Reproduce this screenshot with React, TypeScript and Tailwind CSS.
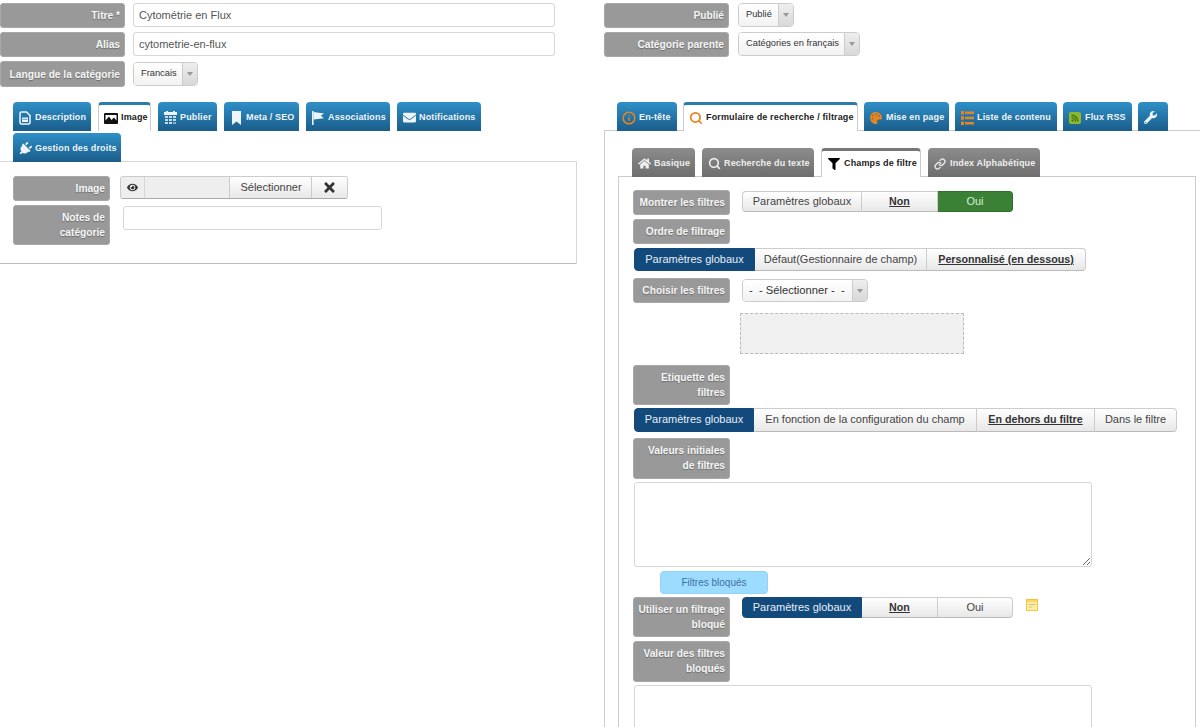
import React from 'react';
import {
  FaEnvelope,
  FaEye,
  FaFilter,
  FaHome,
  FaPalette,
  FaPlug,
  FaRss,
  FaTimes,
  FaWrench,
} from 'react-icons/fa';
import { Info, Link, Search } from 'lucide-react';

const labelBase =
  'shrink-0 rounded-[3px] bg-[#999999] border border-[#a8a8a8] text-right text-[10.2px] font-bold leading-[15px] text-[#f6f6f6] pr-[4px] [text-shadow:0_1px_1px_rgba(0,0,0,0.3)] flex';

function Label({ children, className }: { children: React.ReactNode; className: string }) {
  return <div className={`${labelBase} ${className}`}>{children}</div>;
}

function TextInput({ value, className }: { value: string; className: string }) {
  return (
    <input
      readOnly
      value={value}
      className={`h-[24px] rounded-[3px] border border-[#d6d6d6] bg-white px-[5px] text-[11px] text-[#555555] outline-none ${className}`}
    />
  );
}

function SelectBox({ value, className, textClass }: { value: string; className: string; textClass: string }) {
  return (
    <div className={`flex rounded-[4px] border border-[#cccccc] overflow-hidden ${className}`}>
      <div className={`flex-1 flex items-center bg-gradient-to-b from-white to-[#f2f2f2] text-[#333333] whitespace-nowrap ${textClass}`}>
        {value}
      </div>
      <div className="w-[15px] flex items-center justify-center border-l border-[#cccccc] bg-gradient-to-b from-[#eeeeee] to-[#d8d8d8]">
        <span className="w-0 h-0 border-l-[3px] border-r-[3px] border-t-[4px] border-l-transparent border-r-transparent border-t-[#999999]" />
      </div>
    </div>
  );
}

function Tab({
  icon,
  text,
  w,
  active,
  gray,
}: {
  icon: React.ReactNode;
  text?: string;
  w: string;
  active?: boolean;
  gray?: boolean;
}) {
  const look = active
    ? gray
      ? 'z-10 bg-white border-x border-[#cccccc] border-t-[3px] border-t-[#777777] text-[#222222]'
      : 'z-10 bg-white border-x border-[#cccccc] border-t-[3px] border-t-[#2a7cab] text-[#222222]'
    : gray
      ? 'bg-gradient-to-b from-[#8c8c8c] to-[#6e6e6e] text-[#eeeeee] pt-[2px]'
      : 'bg-gradient-to-b from-[#2f90c8] to-[#1b5d8a] text-[#eef5fa] pt-[2px]';
  return (
    <div
      className={`relative h-[29px] -mb-px shrink-0 rounded-t-[4px] flex items-center pl-[5px] gap-[3px] text-[9px] font-bold tracking-[0.15px] whitespace-nowrap ${w} ${look}`}
    >
      <span className="w-[14px] flex justify-center shrink-0">{icon}</span>
      {text}
    </div>
  );
}

function Seg({
  children,
  w,
  kind,
}: {
  children: string;
  w: string;
  kind?: 'blue' | 'green' | 'bold';
}) {
  const look =
    kind === 'blue'
      ? 'bg-[#134a7c] text-[#e8eef4] border-[#134a7c] text-[11px]'
      : kind === 'green'
        ? 'bg-[#3a8135] text-[#dcecda] border-[#2f6f2b] text-[11px]'
        : kind === 'bold'
          ? 'bg-gradient-to-b from-white to-[#e8e8e8] text-[#333333] font-bold underline border-[#cccccc] border-b-[#bbbbbb] text-[10.7px]'
          : 'bg-gradient-to-b from-white to-[#e8e8e8] text-[#444444] border-[#cccccc] border-b-[#bbbbbb] text-[11px]';
  return (
    <div
      className={`h-full flex items-center justify-center border-y border-r first:border-l first:rounded-l-[4px] last:rounded-r-[4px] whitespace-nowrap pb-px ${w} ${look}`}
    >
      {children}
    </div>
  );
}

function DocIcon() {
  return (
    <svg width="12" height="14" viewBox="0 0 12 14" fill="none">
      <path d="M1 2.500A1.500 1.500 0 0 1 2.500 1H7.500L11 4.500V11.500A1.500 1.500 0 0 1 9.500 13H2.500A1.500 1.500 0 0 1 1 11.500Z" stroke="currentColor" strokeWidth="1.500" />
      <path d="M3 6.500h6v4.500H3z" fill="currentColor" />
      <path d="M3.500 8.300h5" stroke="#2a7cab" strokeWidth="0.700" />
    </svg>
  );
}

function PictureIcon() {
  return (
    <svg width="14" height="11" viewBox="0 0 14 11">
      <rect width="14" height="11" rx="1" fill="#111111" />
      <path d="M1.500 2h11v5.500L10 4.500 7.500 7 5 3.500 1.500 7.500z" fill="#ffffff" />
    </svg>
  );
}

function CalendarIcon() {
  return (
    <svg width="13" height="14" viewBox="0 0 13 14" fill="currentColor">
      <path d="M0 1h2V0h2v1h5V0h2v1h2v3H0z" />
      <path d="M1 5h3v2H1zM5 5h3v2H5zM9 5h3v2H9zM1 8h3v2H1zM5 8h3v2H5zM9 8h3v2H9zM1 11h3v2H1zM5 11h3v2H5z" opacity="0.800" />
      <path d="M9 11h3v2H9z" opacity="0.500" />
    </svg>
  );
}

function BookmarkIcon() {
  return (
    <svg width="9" height="14" viewBox="0 0 9 14" fill="currentColor">
      <path d="M0 0h9v14L4.500 10.500 0 14z" />
    </svg>
  );
}

function Pennant() {
  return (
    <svg width="14" height="14" viewBox="0 0 14 14" fill="currentColor">
      <path d="M1 0h1.600v14H1z" />
      <path d="M2.600 1l10.400 1.600-3.200 2.200 3.200 2.400L2.600 8.400z" />
    </svg>
  );
}

function ListIcon() {
  return (
    <svg width="13" height="14" viewBox="0 0 13 14" fill="#e8841c">
      <path d="M0 0h3v3.400H0zM4 0.500h9v2.400H4zM0 5.300h3v3.400H0zM4 5.800h9v2.400H4zM0 10.600h3v3.400H0zM4 11.100h9v2.400H4z" />
    </svg>
  );
}

function NoteIcon() {
  return (
    <svg className="ml-[13px] mt-[2px]" width="12" height="12" viewBox="0 0 12 12">
      <rect x="0.500" y="0.500" width="11" height="11" fill="#fdeea8" stroke="#f3c443" />
      <rect x="1" y="1" width="10" height="2" fill="#f9d561" />
      <path d="M2.500 5.500h7M2.500 8h4" stroke="#d6c277" strokeWidth="1" />
    </svg>
  );
}

export default function App() {
  return (
    <div className="h-[727px] w-[1200px] overflow-hidden bg-white flex font-['Liberation_Sans',Arial,sans-serif]">
      {/* colonne gauche */}
      <div className="w-[577px] shrink-0 pt-[3px]">
        <div className="flex flex-col gap-[4px]">
          <div className="flex gap-[8px]">
            <Label className="w-[125px] h-[25px] items-center justify-end">Titre *</Label>
            <TextInput value="Cytométrie en Flux" className="w-[422px]" />
          </div>
          <div className="flex gap-[8px]">
            <Label className="w-[125px] h-[25px] items-center justify-end">Alias</Label>
            <TextInput value="cytometrie-en-flux" className="w-[422px]" />
          </div>
          <div className="flex gap-[8px]">
            <Label className="w-[125px] h-[26px] items-center justify-end">Langue de la catégorie</Label>
            <SelectBox value="Francais" className="w-[65px] h-[24px] mt-px" textClass="pl-[7px] text-[9.3px]" />
          </div>
        </div>

        <div className="mt-[15px] pl-[13px] flex flex-wrap gap-x-[7px] gap-y-[3px] relative">
          <Tab w="w-[78px]" text="Description" icon={<DocIcon />} />
          <Tab w="w-[53px]" text="Image" active icon={<PictureIcon />} />
          <Tab w="w-[59px]" text="Publier" icon={<CalendarIcon />} />
          <Tab w="w-[75px]" text="Meta / SEO" icon={<BookmarkIcon />} />
          <Tab w="w-[84px]" text="Associations" icon={<Pennant />} />
          <Tab w="w-[84px]" text="Notifications" icon={<FaEnvelope size={13} />} />
          <Tab w="w-[108px]" text="Gestion des droits" icon={<FaPlug size={14} className="rotate-45" />} />
        </div>
        <div className="ml-[-1px] h-[103px] border border-l-0 border-t-[#d9d9d9] border-r-[#d9d9d9] border-b-[#bbbbbb] pl-[14px] pt-[14px]">
          <div className="flex">
            <Label className="w-[97px] h-[25px] items-center justify-end">Image</Label>
            <div className="ml-[10px] w-[228px] h-[23px] flex rounded-[3px] border border-[#cccccc] border-b-[#aaaaaa] text-[11px] overflow-hidden">
              <div className="w-[24px] bg-[#eeeeee] border-r border-[#d6d6d6] flex items-center justify-center text-[#333333]">
                <FaEye size={11} />
              </div>
              <div className="w-[85px] bg-[#eeeeee] border-r border-[#cccccc]" />
              <div className="w-[82px] bg-gradient-to-b from-white to-[#e8e8e8] border-r border-[#cccccc] flex items-center justify-center text-[#444444] pl-px">
                Sélectionner
              </div>
              <div className="flex-1 bg-gradient-to-b from-white to-[#e8e8e8] flex items-center justify-center text-[#333333]">
                <FaTimes size={15} />
              </div>
            </div>
          </div>
          <div className="flex mt-[4px]">
            <Label className="w-[97px] h-[40px] justify-end pt-[4px]">Notes de catégorie</Label>
            <TextInput value="" className="ml-[13px] mt-px w-[259px]" />
          </div>
        </div>
      </div>

      {/* colonne droite */}
      <div className="ml-[27px] flex-1 pt-[3px] min-w-0">
        <div className="flex flex-col gap-[4px]">
          <div className="flex gap-[9px]">
            <Label className="w-[125px] h-[25px] items-center justify-end">Publié</Label>
            <SelectBox value="Publié" className="w-[56px] h-[24px]" textClass="pl-[7px] text-[9.3px]" />
          </div>
          <div className="flex gap-[9px]">
            <Label className="w-[125px] h-[25px] items-center justify-end">Catégorie parente</Label>
            <SelectBox value="Catégories en français" className="w-[122px] h-[24px]" textClass="pl-[7px] text-[9.3px]" />
          </div>
        </div>

        <div className="mt-[45px] pl-[13px] flex gap-x-[6px] relative">
          <Tab w="w-[60px]" text="En-tête" icon={<Info size={14} strokeWidth={2.5} className="text-[#e8841c]" />} />
          <Tab
            w="w-[175px]"
            text="Formulaire de recherche / filtrage"
            active
            icon={<Search size={14} strokeWidth={3} className="text-[#e8841c]" />}
          />
          <Tab w="w-[85px]" text="Mise en page" icon={<FaPalette size={12} className="text-[#e8841c]" />} />
          <Tab w="w-[102px]" text="Liste de contenu" icon={<ListIcon />} />
          <Tab
            w="w-[69px]"
            text="Flux RSS"
            icon={
              <span className="w-[12px] h-[12px] rounded-[2px] bg-[#8cb82b] flex items-center justify-center">
                <FaRss size={8} className="text-[#3f6b12]" />
              </span>
            }
          />
          <Tab w="w-[30px]" icon={<FaWrench size={13} />} />
        </div>

        <div className="w-[620px] h-[600px] border-t border-l border-[#cccccc] pl-[13px] pt-[17px]">
          <div className="pl-[14px] flex gap-x-[7px] relative">
            <Tab gray w="w-[63px]" text="Basique" icon={<FaHome size={13} />} />
            <Tab gray w="w-[112px]" text="Recherche du texte" icon={<Search size={13} strokeWidth={3} />} />
            <Tab gray active w="w-[100px]" text="Champs de filtre" icon={<FaFilter size={12} className="text-black" />} />
            <Tab gray w="w-[112px]" text="Index Alphabétique" icon={<Link size={12} strokeWidth={2.5} />} />
          </div>
          <div className="w-[578px] h-[560px] border-t border-r border-l border-[#cccccc] pl-[14px] pt-[13px]">
            <div className="flex">
              <Label className="w-[97px] h-[25px] items-center justify-end">Montrer les filtres</Label>
              <div className="ml-[12px] mt-px h-[21px] flex">
                <Seg w="w-[120px]">Paramètres globaux</Seg>
                <Seg w="w-[76px]" kind="bold">Non</Seg>
                <Seg w="w-[75px]" kind="green">Oui</Seg>
              </div>
            </div>
            <Label className="mt-[4px] w-[97px] h-[25px] items-center justify-end">Ordre de filtrage</Label>
            <div className="mt-[4px] ml-px h-[23px] flex">
              <Seg w="w-[121px]" kind="blue">Paramètres globaux</Seg>
              <Seg w="w-[172px]">Défaut(Gestionnaire de champ)</Seg>
              <Seg w="w-[159px]" kind="bold">Personnalisé (en dessous)</Seg>
            </div>
            <div className="mt-[7px] flex">
              <Label className="w-[97px] h-[25px] items-center justify-end">Choisir les filtres</Label>
              <SelectBox
                value={'-\u00a0 -\u00a0Sélectionner -\u00a0 -'}
                className="ml-[12px] mt-px w-[126px] h-[23px]"
                textClass="pl-[6px] text-[11.2px]"
              />
            </div>
            <div className="mt-[10px] ml-[107px] w-[224px] h-[41px] bg-[#f0f0f0] border border-dashed border-[#bbbbbb]" />
            <Label className="mt-[11px] w-[97px] h-[40px] justify-end pt-[4px]">Etiquette des filtres</Label>
            <div className="mt-[3px] ml-px h-[24px] flex">
              <Seg w="w-[120px]" kind="blue">Paramètres globaux</Seg>
              <Seg w="w-[223px]">En fonction de la configuration du champ</Seg>
              <Seg w="w-[118px]" kind="bold">En dehors du filtre</Seg>
              <Seg w="w-[82px]">Dans le filtre</Seg>
            </div>
            <Label className="mt-[6px] w-[97px] h-[41px] justify-end pt-[4px]">Valeurs initiales de filtres</Label>
            <textarea
              readOnly
              className="block mt-[3px] ml-px w-[458px] h-[85px] rounded-[3px] border border-[#d6d6d6] bg-white outline-none"
            />
            <div className="mt-[4px] ml-[27px] w-[108px] h-[23px] rounded-[4px] bg-[#9edcff] border border-[#8fd3fa] flex items-center justify-center text-[10px] text-[#3f6fa8]">
              Filtres bloqués
            </div>
            <div className="mt-[3px] flex">
              <Label className="w-[97px] h-[40px] justify-end pt-[4px]">Utiliser un filtrage bloqué</Label>
              <div className="ml-[12px] h-[21px] flex">
                <Seg w="w-[120px]" kind="blue">Paramètres globaux</Seg>
                <Seg w="w-[76px]" kind="bold">Non</Seg>
                <Seg w="w-[75px]">Oui</Seg>
              </div>
              <NoteIcon />
            </div>
            <Label className="mt-[4px] w-[97px] h-[41px] justify-end pt-[4px]">Valeur des filtres bloqués</Label>
            <textarea
              readOnly
              className="block mt-[3px] ml-px w-[458px] h-[85px] rounded-[3px] border border-[#d6d6d6] bg-white outline-none"
            />
          </div>
        </div>
      </div>
    </div>
  );
}
